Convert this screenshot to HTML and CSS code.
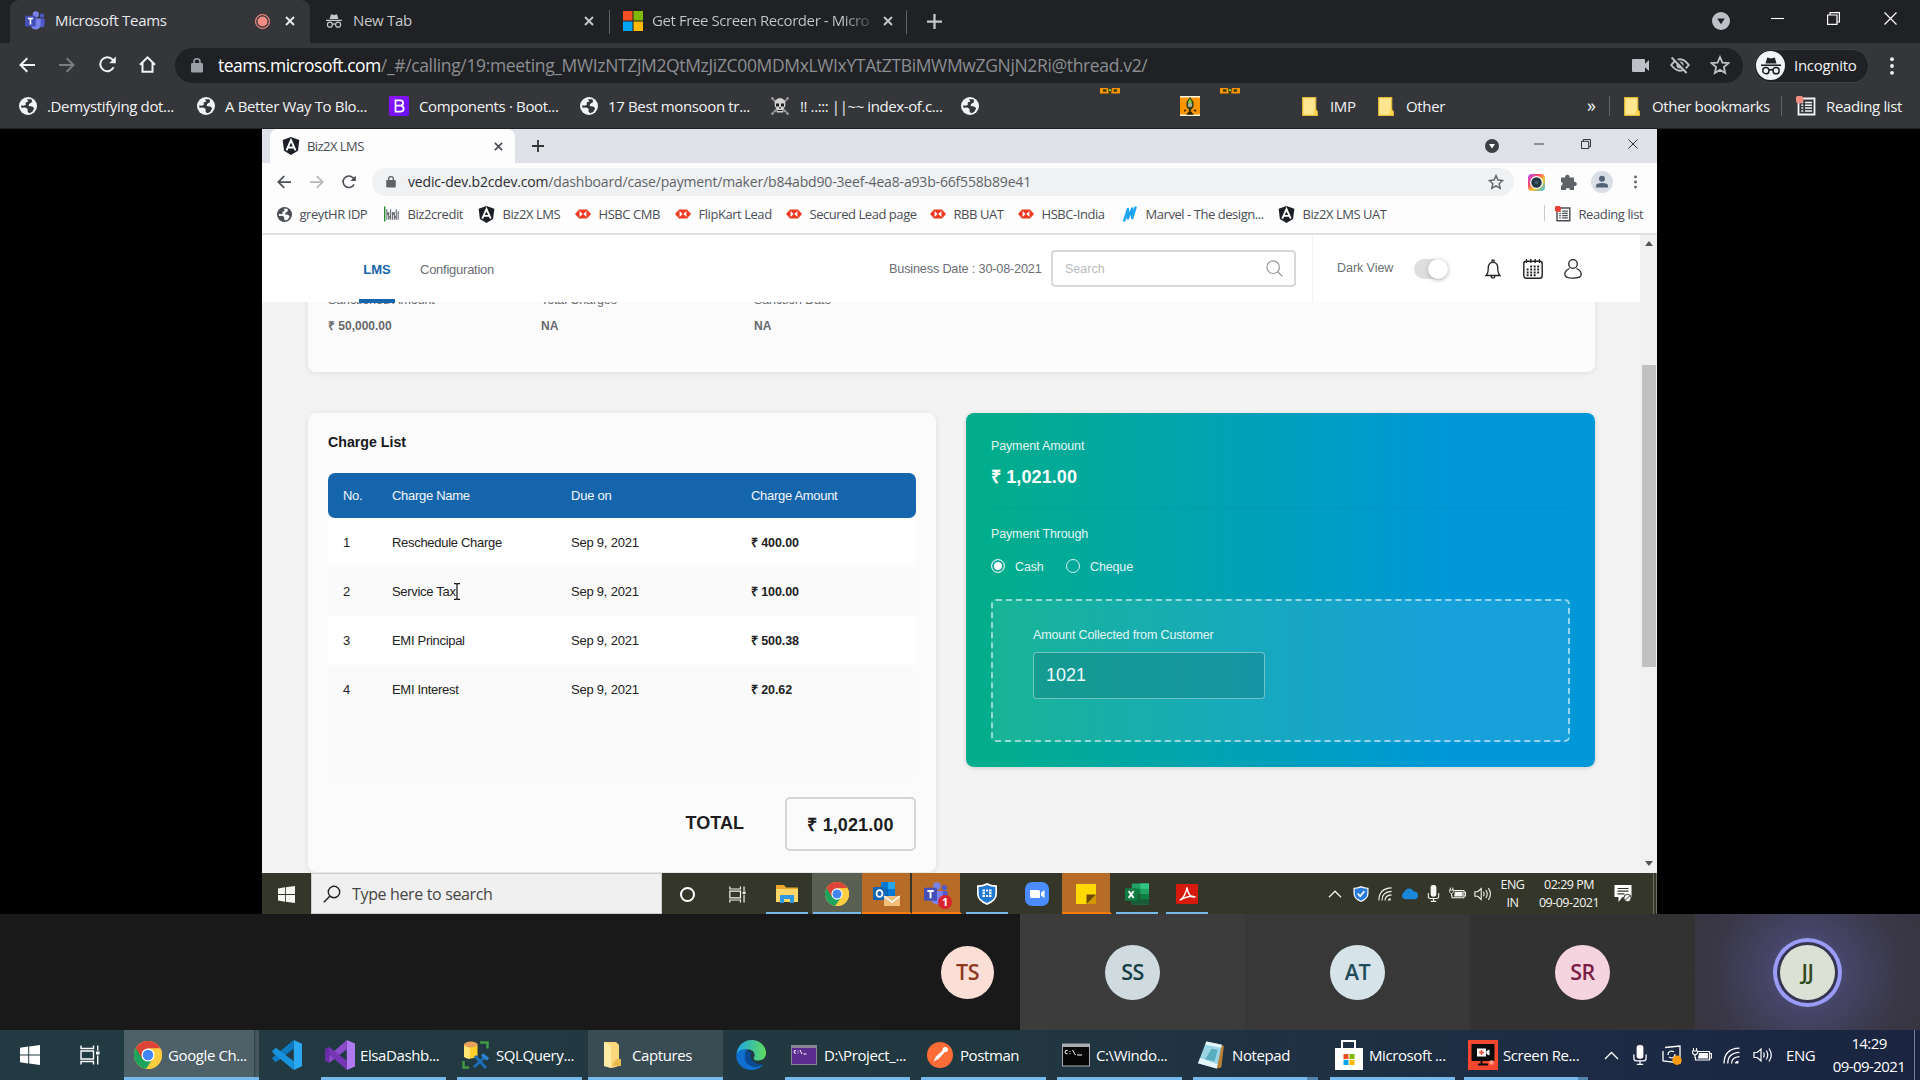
FILE: index.html
```html
<!DOCTYPE html>
<html lang="en">
<head>
<meta charset="utf-8">
<title>Microsoft Teams</title>
<link rel="stylesheet" href="styles.css">
</head>
<body>
<svg class="sprite" aria-hidden="true">
  <defs>
    <linearGradient id="bootG" x1="0" y1="0" x2="1" y2="1"><stop offset="0" stop-color="#9013fe"/><stop offset="1" stop-color="#6610f2"/></linearGradient>
    <linearGradient id="edgeG" x1="0" y1="0" x2="1" y2="0"><stop offset="0" stop-color="#1ea5e8"/><stop offset="1" stop-color="#5fdc5a"/></linearGradient>
    <linearGradient id="lensG" x1="0" y1="0" x2="1" y2="1"><stop offset="0" stop-color="#b44cff"/><stop offset=".35" stop-color="#ff4b6b"/><stop offset=".6" stop-color="#ffc629"/><stop offset="1" stop-color="#27b8f5"/></linearGradient>
  </defs>
  <symbol id="teams" viewBox="0 0 20 20"><circle cx="17" cy="4.6" r="2.2" fill="#5059c9"/><circle cx="10.8" cy="3.4" r="3.1" fill="#7b83eb"/><path d="M14 7.5h5.6v6a3 3 0 0 1-4.4 2.6z" fill="#5059c9"/><path d="M6 7.5h9.6v6.8a5 5 0 0 1-9.6 1z" fill="#7b83eb"/><rect y="4.8" width="10.8" height="10.8" rx="1" fill="#4450b8"/><path d="M2.8 7.5h5.3M5.45 7.5v6" stroke="#fff" stroke-width="1.6"/></symbol>
  <symbol id="x" viewBox="0 0 10 10"><path d="M1 1l8 8M9 1l-8 8" stroke="currentColor" stroke-width="1.9" fill="none"/></symbol>
  <symbol id="plus" viewBox="0 0 14 14"><path d="M7 0v14M0 7h14" stroke="currentColor" stroke-width="2.1"/></symbol>
  <symbol id="incog" viewBox="0 0 16 16"><path d="M5 1.2l3 .7 3-.7 1.4 4.8H3.600z" fill="currentColor"/><path d="M0 7.4h16" stroke="currentColor" stroke-width="1.3"/><g fill="none" stroke="currentColor" stroke-width="1.2"><circle cx="3.900" cy="11.700" r="2.500"/><circle cx="12.100" cy="11.700" r="2.500"/><path d="M6.400 11.400q1.600-1 3.200 0"/></g></symbol>
  <symbol id="mslogo" viewBox="0 0 20 20"><path d="M0 0h9.500v9.500H0z" fill="#f25022"/><path d="M10.500 0H20v9.500h-9.500z" fill="#7fba00"/><path d="M0 10.500h9.500V20H0z" fill="#00a4ef"/><path d="M10.500 10.500H20V20h-9.500z" fill="#ffb900"/></symbol>
  <symbol id="search-tabs" viewBox="0 0 18 18"><circle cx="9" cy="9" r="9" fill="currentColor"/><path class="knock" d="M5.200 6.500h7.600L9 12.300z"/></symbol>
  <symbol id="min" viewBox="0 0 13 13"><path d="M0 6.500h13" stroke="currentColor" stroke-width="1.100"/></symbol>
  <symbol id="restore" viewBox="0 0 13 13"><path d="M.6 3h9.400v9.400H.6zM3 3V.6h9.400V10H10" fill="none" stroke="currentColor" stroke-width="1.200"/></symbol>
  <symbol id="close" viewBox="0 0 13 13"><path d="M.5.5l12 12M12.500.5l-12 12" stroke="currentColor" stroke-width="1.200"/></symbol>
  <symbol id="back" viewBox="0 0 16 16"><path d="M16 8H1.800M8.300 1.200L1.500 8l6.800 6.800" fill="none" stroke="currentColor" stroke-width="2"/></symbol>
  <symbol id="fwd" viewBox="0 0 16 16"><path d="M0 8h14.200M7.700 1.200L14.500 8l-6.800 6.800" fill="none" stroke="currentColor" stroke-width="2"/></symbol>
  <symbol id="reload" viewBox="0 0 17 17"><path d="M14.600 11.300A7 7 0 1 1 13.600 3.600L15 5.200" fill="none" stroke="currentColor" stroke-width="2"/><path d="M16.800.6v6.600h-6.600z" fill="currentColor"/></symbol>
  <symbol id="home" viewBox="0 0 17 17"><path d="M1 8.700L8.500 1.400 16 8.700M3.500 7v8.800h10V7" fill="none" stroke="currentColor" stroke-width="2"/></symbol>
  <symbol id="lock" viewBox="0 0 12 15"><rect y="5" width="12" height="9.500" rx="1.300" fill="currentColor"/><path d="M3 6V3.800a3 3 0 0 1 6 0V6" fill="none" stroke="currentColor" stroke-width="1.600"/></symbol>
  <symbol id="cam" viewBox="0 0 17 13"><path d="M1 0h11a1 1 0 0 1 1 1v3.700L17 1v11l-4-3.700V12a1 1 0 0 1-1 1H1a1 1 0 0 1-1-1V1a1 1 0 0 1 1-1z" fill="currentColor"/></symbol>
  <symbol id="eye" viewBox="0 0 20 18"><path d="M1.200 9Q10-2.500 18.800 9 10 20.500 1.200 9z" fill="none" stroke="currentColor" stroke-width="2"/><circle cx="10" cy="9" r="3.600" fill="currentColor"/><path d="M3 .5l15 16" class="cut" stroke-width="2.500"/><path d="M1.600 1.500l15 15.500" stroke="currentColor" stroke-width="1.900"/></symbol>
  <symbol id="star" viewBox="0 0 18 18"><path d="M9 1.800l2.200 5 5.400.5-4.100 3.600 1.200 5.300L9 13.400l-4.700 2.800 1.200-5.300L1.400 7.300l5.400-.5z" fill="none" stroke="currentColor" stroke-width="1.600"/></symbol>
  <symbol id="dots" viewBox="0 0 4 18"><circle cx="2" cy="2.200" r="1.900" fill="currentColor"/><circle cx="2" cy="9" r="1.900" fill="currentColor"/><circle cx="2" cy="15.800" r="1.900" fill="currentColor"/></symbol>
  <symbol id="globe" viewBox="0 0 18 18"><circle cx="9" cy="9" r="9" fill="currentColor"/><path class="knock" d="M8 2.200l4.500 0 .6 2.700-3 2.200-.5 1.800 3.600.5 2 1.800-2 3.700-3.200 1.300-1.500-1.600.2-2.600-2.300-1.500-3.900.3-.4-2.600 2.400.6 2.400-1-.3-2.200 2.700-1.200z"/></symbol>
  <symbol id="boot" viewBox="0 0 20 20"><rect width="20" height="20" rx="2" fill="url(#bootG)"/><path d="M6.500 4.300h4.600c4 0 4 4.900.4 5.300 4.300.3 4.300 6.100-.4 6.100H6.500zM6.500 9.700h4.800" fill="none" stroke="#fff" stroke-width="1.700"/></symbol>
  <symbol id="skull" viewBox="0 0 20 20"><path d="M1.500 1.500l17 17M18.500 1.500l-17 17" stroke="#9b9b9b" stroke-width="2.200" stroke-dasharray="3 .5"/><path d="M4.500 8a5.500 6 0 1 1 11 0q0 3-1.800 4l-.5 4.500H6.800L6.300 12Q4.500 11 4.500 8z" fill="#d2d2d2"/><path d="M6 7.500h3v3H6zM11 7.500h3v3h-3zM9.500 11h1l.5 1.500H9zM7.500 14h5v.9h-5z" fill="#1e1e1e"/></symbol>
  <symbol id="sprout" viewBox="0 0 20 20"><path d="M0 0h20v20H0z" fill="#fff5e4"/><path d="M0 1.500h20v17H0z" fill="#ff9500"/><path d="M10 1l3.500 5v5L10 15l-3.500-4V6z" fill="#2e3a12"/><path d="M10 2.500l2.200 4L10 8 7.800 6.500z" fill="#7ecb3f"/><circle cx="10" cy="9" r="2.200" fill="#a9b5a0"/><path d="M10 14v3M6.500 18h7M4 15l2-1M16 15l-2-1M8 16.500h4" stroke="#2c2600" stroke-width="1.600"/></symbol>
  <symbol id="sprout-strip" viewBox="0 0 20 7"><path d="M0 0h20v5.500H0z" fill="#ff9500"/><path d="M3 1.200h3.500v2.600H3zM13.500 1.200H17v2.600h-3.500zM8 0h4l-1 7H9z" fill="#42390f"/><path d="M9 1h2v2H9z" fill="#71c23e"/></symbol>
  <symbol id="folder" viewBox="0 0 16 19"><path d="M.7.7h13V14l1.600.4v3.900H.7z" fill="#ffe68f" stroke="#e8bd33" stroke-width="1.200"/><path d="M12.300 12.500h2.200v5h-3.200z" fill="#ffd64d"/></symbol>
  <symbol id="reading" viewBox="0 0 20 20"><path d="M2.500 2.500h16v16h-16z" fill="none" stroke="currentColor" stroke-width="1.800"/><path d="M5.300 6.500h2M5.300 9.300h2M5.300 12.100h2M5.300 14.900h2M9 6.500h7M9 9.300h7M9 12.100h7M9 14.900h7" stroke="currentColor" stroke-width="1.500"/><circle cx="3.500" cy="3.500" r="4" class="dot"/></symbol>
  <symbol id="angular" viewBox="0 0 18 18"><path d="M9 0l8.300 2.900L16 13.800 9 18l-7-4.200L.7 2.900z" fill="#1c2026"/><path d="M4.500 13.400L9 3.200l4.500 10.200M6.300 10.500h5.400" fill="none" stroke="#fff" stroke-width="1.900"/></symbol>
  <symbol id="b2c" viewBox="0 0 17 16"><path d="M.7 0v16" stroke="#1f8a2a" stroke-width="1.500"/><path d="M3 3v11M5 6v8M7 3v11M9 6v8M11 6v8M13 3v11M15 5v9M3 6l4 7M9 6l4 7" fill="none" stroke="#6c7176" stroke-width="1.200"/></symbol>
  <symbol id="hsbc" viewBox="0 0 16 10"><path d="M0 5l4-4.500h8L16 5l-4 4.500H4z" fill="#ed3b22"/><path d="M4.600 2L7.600 5l-3 3zM11.400 2L8.400 5l3 3z" fill="#fff"/></symbol>
  <symbol id="marvel" viewBox="0 0 15 16"><path d="M1.800 14.500L5.400 3v9.500L9.700 2.500v9.700L13 1.500" fill="none" stroke="#1fa4f4" stroke-width="2.500" stroke-linejoin="round" stroke-linecap="round"/></symbol>
  <symbol id="lens" viewBox="0 0 17 17"><rect width="17" height="17" rx="4" fill="url(#lensG)"/><circle cx="8.500" cy="8.500" r="6.500" fill="#fff"/><circle cx="8.500" cy="8.500" r="5.200" fill="#223540"/><circle cx="8.500" cy="8.500" r="2" fill="#3c5868"/></symbol>
  <symbol id="puzzle" viewBox="0 0 16 16"><path d="M0 3.500h4.300a2.200 2.200 0 1 1 4.200 0H13v4.300a2.200 2.200 0 1 1 0 4.200v4H9a2.100 2.100 0 0 0-4.200 0H0v-4.200a2.100 2.100 0 0 0 0-4.100z" fill="#5f6368"/></symbol>
  <symbol id="avatar" viewBox="0 0 22 22"><circle cx="11" cy="11" r="11" fill="#d9dde6"/><circle cx="11" cy="7.700" r="3" fill="#526278"/><path d="M5 16.500v-1.800q0-2.700 6-2.700t6 2.700v1.800z" fill="#526278"/></symbol>
  <symbol id="mag" viewBox="0 0 17 17"><circle cx="7.200" cy="7.200" r="6.300" fill="none" stroke="currentColor" stroke-width="1.200"/><path d="M11.700 11.700l4.700 4.700" stroke="currentColor" stroke-width="1.300"/></symbol>
  <symbol id="wmag" viewBox="0 0 18 18"><circle cx="11" cy="7" r="5.700" fill="none" stroke="currentColor" stroke-width="1.400"/><path d="M7 11L.8 17.200" stroke="currentColor" stroke-width="1.500"/></symbol>
  <symbol id="bell" viewBox="0 0 16 20"><path d="M1 16.500q2.200-2 2.200-7Q3.200 3.300 8 3.300t4.800 6.200q0 5 2.200 7z" fill="none" stroke="#222" stroke-width="1.300"/><path d="M7 3V1.200h2V3M6.200 17q0 2 1.800 2t1.800-2" fill="none" stroke="#222" stroke-width="1.200"/></symbol>
  <symbol id="cal" viewBox="0 0 20 20"><rect x=".8" y="2.300" width="18.400" height="16.900" rx="2.500" fill="none" stroke="#222" stroke-width="1.400"/><path d="M3.500 0v4M7.800 0v4M12.200 0v4M16.500 0v4" stroke="#222" stroke-width="1.300"/><path d="M7.200 7.500h9.300M3.700 10.500h12.800M3.700 13.500h12.800M3.700 16.300h9" stroke="#222" stroke-width="1.900" stroke-dasharray="1.900 1.600"/></symbol>
  <symbol id="user" viewBox="0 0 18 20"><circle cx="9" cy="5" r="4.300" fill="none" stroke="#222" stroke-width="1.300"/><path d="M5.500 9.500Q.8 11.500.8 15.200q0 4 8.200 4t8.200-4q0-3.700-4.700-5.700" fill="none" stroke="#222" stroke-width="1.300"/></symbol>
  <symbol id="win" viewBox="0 0 20 20"><path d="M0 2.800l8.200-1.200v7.900H0zM9.200 1.500L20 0v9.500H9.200zM0 10.500h8.200v7.900L0 17.200zM9.200 10.500H20V20L9.200 18.500z" fill="currentColor"/></symbol>
  <symbol id="tview" viewBox="0 0 20 19"><path d="M1 0v3h12.500V0M1 19v-3h12.500v3M1 5.500h12.500v8H1zM17.700 0v5M17.700 10v9" fill="none" stroke="currentColor" stroke-width="1.400"/><path d="M16 6h3.500v3H16z" fill="currentColor"/></symbol>
  <symbol id="explorer" viewBox="0 0 24 20"><path d="M1 1h8l2 2.500h12V18H1z" fill="#eba92c"/><path d="M1 5h22v13H1z" fill="#ffd667"/><path d="M5 19v-8h14v8h-4v-4H9v4z" fill="#2f97e0"/></symbol>
  <symbol id="chrome" viewBox="0 0 26 26"><circle cx="13" cy="13" r="13" fill="#ffcd40"/><path d="M13 13L1.700 6.500a13 13 0 0 0 9.500 19.400L19 14z" fill="#1da35a"/><path d="M13 7h11.500A13 13 0 0 0 1.700 6.500L7.500 16z" fill="#dc4437"/><path d="M19.800 13A6.500 6.500 0 0 1 18 17l-6.800 8.900a13 13 0 0 0 13.300-19H13z" fill="#ffcd40"/><circle cx="13" cy="13" r="6.100" fill="#fff"/><circle cx="13" cy="13" r="4.900" fill="#4285f4"/></symbol>
  <symbol id="outlook" viewBox="0 0 27 26"><path d="M8 1h14v14H8z" fill="#28a8ea"/><path d="M8 1h7v7H8zM15 8h7v7h-7z" fill="#0078d4"/><path d="M8 8h7v7H8z" fill="#0364b8"/><rect y="6" width="13" height="13" rx="1" fill="#1066b5"/><ellipse cx="6.500" cy="12.500" rx="3" ry="3.400" fill="none" stroke="#fff" stroke-width="1.800"/><path d="M11 15h16v10H11z" fill="#f3bd7b"/><path d="M11 15l8 6 8-6" fill="none" stroke="#fff" stroke-width="1.500"/></symbol>
  <symbol id="shield" viewBox="0 0 20 22"><path d="M10 0q5 2.600 10 2.300V11q0 7-10 11Q0 18 0 11V2.300Q5 2.600 10 0z" fill="#fff"/><path d="M10 2q4 2 8.300 2v7q0 5.700-8.300 9-8.300-3.300-8.300-9V4Q6 4 10 2z" fill="#1e78d2"/><path d="M5.500 6.500h2.500v2H5.500zM9 6.500h2v2H9zM12 6.500h2.500v2H12zM5.500 9.300h2.500v2H5.500zM12 9.300h2.500v2H12zM5.500 12.100h2.500v2H5.500zM9 12.100h2v2H9zM12 12.100h2.500v2H12z" fill="#fff"/></symbol>
  <symbol id="zoomapp" viewBox="0 0 24 24"><rect width="24" height="24" rx="7" fill="#4a8cff"/><path d="M5 8h8.500q1.500 0 1.500 1.500V16H6.500Q5 16 5 14.500zM16 10.500L19.500 8v8L16 13.500z" fill="#fff"/></symbol>
  <symbol id="sticky" viewBox="0 0 20 20"><path d="M0 0h20v11l-9 9H0z" fill="#ffd900"/><path d="M10.500 10.500H20L10.500 20z" fill="#6b4a10"/><path d="M20 11v9h-9z" fill="#d49600"/></symbol>
  <symbol id="excel" viewBox="0 0 25 22"><rect x="7" width="18" height="22" rx="1" fill="#21a366"/><path d="M7 5.500h9V11H7z" fill="#107c41"/><path d="M16 0h9v5.500h-9z" fill="#33c481"/><path d="M7 11h18v11H7z" fill="#185c37"/><path d="M16 11h9v5.500h-9z" fill="#107c41"/><rect y="5" width="13" height="13" rx="1" fill="#107c41"/><path d="M3.800 8l5.200 7M9 8l-5.200 7" stroke="#fff" stroke-width="1.900"/></symbol>
  <symbol id="pdf" viewBox="0 0 23 21"><rect width="23" height="21" rx="1" fill="#d61a0c"/><path d="M4 17c3-1 7-8 7.500-13.500.8 7 4 11 8 10-3-1.500-10 0-15.500 3.500z" fill="none" stroke="#fff" stroke-width="1.500"/></symbol>
  <symbol id="caret" viewBox="0 0 15 9"><path d="M1 8l6.500-6.500L14 8" fill="none" stroke="currentColor" stroke-width="1.300"/></symbol>
  <symbol id="shieldok" viewBox="0 0 16 17"><path d="M8 0q4 2 8 1.800V8q0 6-8 9-8-3-8-9V1.800Q4 2 8 0z" fill="#fff"/><path d="M8 1.500q3.500 1.500 6.700 1.500v5.200q0 4.800-6.700 7.400-6.700-2.600-6.700-7.400V3Q4.500 3 8 1.500z" fill="#2a7bdb"/><path d="M4.500 8l2.600 3 4.500-5.500" fill="none" stroke="#fff" stroke-width="1.700"/></symbol>
  <symbol id="wifi" viewBox="0 0 16 16"><g fill="none" stroke="currentColor" stroke-width="1.200"><path d="M1 15.500Q1 1.500 15.500 1"/><path d="M4.500 15.500Q4.500 5.500 15.500 5"/><path d="M8 15.500Q8 9.500 15.500 9"/></g><path d="M11.300 15.500q0-2.500 3.200-2.600v2.600z" fill="currentColor"/></symbol>
  <symbol id="cloud" viewBox="0 0 18 12"><path d="M4 12a4 4 0 0 1-.4-7.600A5.300 5.300 0 0 1 13.500 4 4 4 0 0 1 14.300 12z" fill="#1a87d9"/></symbol>
  <symbol id="mic" viewBox="0 0 13 19"><rect x="3.300" width="6.400" height="13" rx="2.600" fill="currentColor"/><path d="M.7 9v3.500q0 2.500 2.300 2.500h7q2.300 0 2.300-2.500V9M6.500 15v3M3.500 18.300h6" fill="none" stroke="currentColor" stroke-width="1.200"/></symbol>
  <symbol id="batt" viewBox="0 0 20 14"><path d="M6 3.500h11.500V12H3.500V9M17.500 5.500h2v4.500h-2" fill="none" stroke="currentColor" stroke-width="1.200"/><path d="M7 5h9v5.500H6z" fill="currentColor"/><path d="M1.500 0v3M4.500 0v3M.3 3h5.400v2L3 7.500.3 5zM3 7v3" fill="none" stroke="currentColor" stroke-width="1.100"/></symbol>
  <symbol id="sound" viewBox="0 0 20 16"><path d="M1 5.500h3.200L8 2v12l-3.800-3.500H1z" fill="none" stroke="currentColor" stroke-width="1.200"/><path d="M10.500 5.500q1.500 2.500 0 5M13.200 3.500q3 4.500 0 9M16 1.500q4.500 6.500 0 13" fill="none" stroke="currentColor" stroke-width="1.200"/></symbol>
  <symbol id="note" viewBox="0 0 17 18"><path d="M0 0h17v12H8l-4 5v-5H0z" fill="#fff"/><path d="M3 3.500h11M3 6.200h11M3 8.900h7" stroke="#333628" stroke-width="1.200"/><circle cx="13" cy="13" r="3.700" fill="#fff" stroke="#333628"/><path d="M10.500 15.500l5-5" stroke="#333628"/></symbol>
  <symbol id="vscode" viewBox="0 0 31 31"><path d="M22.500 0L31 3.800v23.400L22.500 31z" fill="#2aa8f2"/><path d="M22.500 0v9L4 23l-3.500-3v-1.800z" fill="#0c7ac2"/><path d="M22.500 31v-9L4 8 .5 11v1.800z" fill="#1793de"/></symbol>
  <symbol id="vstudio" viewBox="0 0 31 31"><path d="M22.500 0L31 3.500v24L22.500 31z" fill="#b179f1"/><path d="M22.500 0v9.500L4.500 23.500 0 21.500V20z" fill="#8b4ccb"/><path d="M22.500 31v-9.500L4.500 7.500 0 9.500V11z" fill="#7536b5"/><path d="M0 9.500l4.500-2v16L0 21.500z" fill="#6a2ca8"/></symbol>
  <symbol id="sql" viewBox="0 0 28 28"><path d="M2 3.500v12q7 4 13.500 0v-12z" fill="#ffcf2c"/><path d="M2 4v12q3 1.800 6 2V4z" fill="#ffe476"/><ellipse cx="8.800" cy="3.500" rx="6.800" ry="3" fill="#e6a25a"/><path d="M18 1.500h7.500v6M1.500 20v6.500H7" fill="none" stroke="#3f9b44" stroke-width="2.500"/><path d="M13 15l11 12M24 15L12 26" stroke="#1e6db8" stroke-width="3"/><path d="M20 13.500l6 5" stroke="#2b86d1" stroke-width="3.500"/></symbol>
  <symbol id="bigfolder" viewBox="0 0 18 26"><path d="M1 0h12l3 3v21l-7 2-8-2z" fill="#fbd87b"/><path d="M1 0l7 3.500V26l-7-2z" fill="#ffeaa8"/><path d="M13 17h5v7h-9z" fill="#e9bb4c"/></symbol>
  <symbol id="edge" viewBox="0 0 30 30"><path d="M.5 14C1.500 5.500 8 0 15.500 0 24 0 30 6 30 13c0 5-3.500 7.500-8 7.500-3.500 0-5-1.500-4-3 2-4-1-8-6-8-6 0-10 3-11.500 4.500z" fill="url(#edgeG)"/><path d="M.3 14.500C2 10.500 7 8.800 11.500 9.500 7.500 13 8 22 14.500 25.500c4 2.200 9 1.500 13-1.500-3 4.500-7.500 6-12.500 6C6.500 30-.5 23 .3 14.500z" fill="#0f6fd0"/><path d="M11 11c-4.500 5-2 13 4 14.800 4 1.200 8.500.7 12.500-1.800-4.500 1-10.500-.5-12.500-6-.8-2.500 0-4 .5-5Q14 11 11 11z" fill="#0a4b94"/></symbol>
  <symbol id="cmdp" viewBox="0 0 26 20"><path d="M0 0h26v20H0z" fill="#8c8795"/><path d="M1 3h24v16H1z" fill="#5c2d91"/><path d="M5 5.500q-2-.5-2 1.300t2 1.300M7 5.800v.8M7 7.700v.8M9 5l2 4M12.500 9h3" stroke="#fff" fill="none"/></symbol>
  <symbol id="cmdk" viewBox="0 0 28 23"><path d="M0 0h28v23H0z" fill="#a9adb2"/><path d="M1 3.500h26V22H1z" fill="#060606"/><path d="M5.500 7q-2.500-.5-2.500 1.600t2.500 1.600M8 7.500v.9M8 9.500v.9M10.500 6.500l3 5M15 11.500h5" stroke="#fff" fill="none"/></symbol>
  <symbol id="postman" viewBox="0 0 26 26"><circle cx="13" cy="13" r="13" fill="#ff6c37"/><path d="M6.500 19.500l2.500-5 7-6.500 2 2-6.500 7z" fill="#fff"/><circle cx="18.300" cy="7.500" r="2.600" fill="#fff"/></symbol>
  <symbol id="notepad" viewBox="0 0 27 26"><path d="M8 1l17 3-2.500 21L18 26z" fill="#b98038"/><path d="M8 0l15 3-5 23L0 21z" fill="#9bd5e4"/><path d="M8 0l15 3-.7 3L7 3zM2 16l17 6-1 4L0 21z" fill="#e6f6f8"/><path d="M13 7l6 1-3 11-9-2z" fill="#58aebf"/></symbol>
  <symbol id="store" viewBox="0 0 28 30"><path d="M7 9V1h13v8" fill="none" stroke="#fff" stroke-width="2"/><path d="M0 8h28v22H0z" fill="#fff"/><path d="M8.500 14h5v5h-5z" fill="#f25022"/><path d="M14.500 14h5v5h-5z" fill="#7fba00"/><path d="M8.500 20h5v5h-5z" fill="#00a4ef"/><path d="M14.500 20h5v5h-5z" fill="#ffb900"/></symbol>
  <symbol id="screc" viewBox="0 0 30 30"><path d="M0 0h30v30H0z" fill="#f4472f"/><rect x="3.500" y="4" width="23" height="17" rx="1" fill="#0c0c0c"/><path d="M9 8.500h9v8H9zM18.500 11l3-1.500v6l-3-1.500z" fill="#fff"/><path d="M11 12.500h5M13.500 10v5" stroke="#f4472f" stroke-width="1.500"/><path d="M13.500 21v3M10 24.500h10" stroke="#0c0c0c" stroke-width="2"/><circle cx="23.500" cy="22.500" r="2.200" fill="#ff9c88"/></symbol>
  <symbol id="sync" viewBox="0 0 20 20"><path d="M3 2.500L18 1v17L1 16V6" fill="none" stroke="currentColor" stroke-width="1.300"/><path d="M6 10q0-4 4-4l2 1M13 9q0 4-4 4l-2-1" fill="none" stroke="currentColor" stroke-width="1.200"/><circle cx="15" cy="15.200" r="4.700" fill="#ff9c12"/></symbol>
</svg>

<div class="browser dark">
  <div class="tabs">
    <div class="tab tab-on"><svg class="i20"><use href="#teams"/></svg><span>Microsoft Teams</span><i class="rec"></i><svg class="i10"><use href="#x"/></svg></div>
    <div class="tab tab-new"><svg class="i16"><use href="#incog"/></svg><span>New Tab</span><svg class="i10"><use href="#x"/></svg></div>
    <div class="tab tab-get"><svg class="i20"><use href="#mslogo"/></svg><span>Get Free Screen Recorder - Micro</span><svg class="i10"><use href="#x"/></svg></div>
    <svg class="newtab"><use href="#plus"/></svg>
    <div class="wctl"><svg class="i18 srch"><use href="#search-tabs"/></svg><svg class="i13"><use href="#min"/></svg><svg class="i13"><use href="#restore"/></svg><svg class="i13"><use href="#close"/></svg></div>
  </div>
  <div class="toolbar">
    <div class="nav"><svg class="i16"><use href="#back"/></svg><svg class="i16 off"><use href="#fwd"/></svg><svg class="i17"><use href="#reload"/></svg><svg class="i17"><use href="#home"/></svg></div>
    <div class="omni"><svg class="lock"><use href="#lock"/></svg><span class="url"><b>teams.microsoft.com</b><span class="path">/_#/calling/19:meeting_MWIzNTZjM2QtMzJiZC00MDMxLWIxYTAtZTBiMWMwZGNjN2Ri@thread.v2/</span></span>
      <div class="oact"><svg class="cam"><use href="#cam"/></svg><svg class="eye"><use href="#eye"/></svg><svg class="i20"><use href="#star"/></svg></div></div>
    <div class="pill"><i><svg class="i20"><use href="#incog"/></svg></i><span>Incognito</span></div>
    <svg class="dots"><use href="#dots"/></svg>
  </div>
  <div class="marks">
    <div class="bm"><svg class="i18"><use href="#globe"/></svg><span>.Demystifying dot...</span></div>
    <div class="bm"><svg class="i18"><use href="#globe"/></svg><span>A Better Way To Blo...</span></div>
    <div class="bm"><svg class="i20"><use href="#boot"/></svg><span>Components · Boot...</span></div>
    <div class="bm"><svg class="i18"><use href="#globe"/></svg><span>17 Best monsoon tr...</span></div>
    <div class="bm"><svg class="i20"><use href="#skull"/></svg><span class="tight">!! ..::: ||~~ index-of.c...</span></div>
    <div class="bm"><svg class="i18"><use href="#globe"/></svg></div>
    <svg class="strip"><use href="#sprout-strip"/></svg>
    <div class="bm"><svg class="i20"><use href="#sprout"/></svg></div>
    <svg class="strip"><use href="#sprout-strip"/></svg>
    <div class="bm"><svg class="fold"><use href="#folder"/></svg><span>IMP</span></div>
    <div class="bm"><svg class="fold"><use href="#folder"/></svg><span>Other</span></div>
    <div class="bm more">»</div>
    <div class="bm ruled"><svg class="fold"><use href="#folder"/></svg><span>Other bookmarks</span></div>
    <div class="bm ruled"><svg class="i20"><use href="#reading"/></svg><span>Reading list</span></div>
  </div>
</div>

<div class="stage">
  <div class="shared">
    <div class="light">
      <div class="ltabs">
        <div class="ltab"><svg class="i18"><use href="#angular"/></svg><span>Biz2X LMS</span><svg class="i9"><use href="#x"/></svg></div>
        <svg class="i12 lnew"><use href="#plus"/></svg>
        <div class="lctl"><svg class="i14 srch"><use href="#search-tabs"/></svg><svg class="i10"><use href="#min"/></svg><svg class="i10"><use href="#restore"/></svg><svg class="i10"><use href="#close"/></svg></div>
      </div>
      <div class="lbar">
        <div class="lnav"><svg class="i14"><use href="#back"/></svg><svg class="i14 off"><use href="#fwd"/></svg><svg class="i14"><use href="#reload"/></svg></div>
        <div class="lomni"><svg class="llock"><use href="#lock"/></svg><span class="lurl"><b>vedic-dev.b2cdev.com</b><span>/dashboard/case/payment/maker/b84abd90-3eef-4ea8-a93b-66f558b89e41</span></span><svg class="i16"><use href="#star"/></svg></div>
        <div class="lext"><svg class="i17"><use href="#lens"/></svg><svg class="i16"><use href="#puzzle"/></svg><svg class="i22"><use href="#avatar"/></svg><svg class="ldots"><use href="#dots"/></svg></div>
      </div>
      <div class="lmarks">
        <div class="lbm"><svg class="i15"><use href="#globe"/></svg><span>greytHR IDP</span></div>
        <div class="lbm"><svg class="i16"><use href="#b2c"/></svg><span>Biz2credit</span></div>
        <div class="lbm"><svg class="i17"><use href="#angular"/></svg><span>Biz2X LMS</span></div>
        <div class="lbm"><svg class="i16"><use href="#hsbc"/></svg><span>HSBC CMB</span></div>
        <div class="lbm"><svg class="i16"><use href="#hsbc"/></svg><span>FlipKart Lead</span></div>
        <div class="lbm"><svg class="i16"><use href="#hsbc"/></svg><span>Secured Lead page</span></div>
        <div class="lbm"><svg class="i16"><use href="#hsbc"/></svg><span>RBB UAT</span></div>
        <div class="lbm"><svg class="i16"><use href="#hsbc"/></svg><span>HSBC-India</span></div>
        <div class="lbm"><svg class="i16"><use href="#marvel"/></svg><span>Marvel - The design...</span></div>
        <div class="lbm"><svg class="i17"><use href="#angular"/></svg><span>Biz2X LMS UAT</span></div>
        <div class="lbm lread"><svg class="i16"><use href="#reading"/></svg><span>Reading list</span></div>
      </div>
    </div>

    <div class="view">
      <div class="page">
        <header class="head">
          <a class="lms">LMS</a><a class="conf">Configuration</a>
          <span class="bdate">Business Date : 30-08-2021</span>
          <div class="find"><span>Search</span><svg class="i17"><use href="#mag"/></svg></div>
          <div class="tools"><span class="dv">Dark View</span><i class="toggle"></i><svg class="bell"><use href="#bell"/></svg><svg class="i20"><use href="#cal"/></svg><svg class="usr"><use href="#user"/></svg></div>
        </header>
        <section class="card summary">
          <div><label>Sanctioned Amount</label><b>₹ 50,000.00</b></div>
          <div><label>Total Charges</label><b>NA</b></div>
          <div><label>Sanction Date</label><b>NA</b></div>
        </section>
        <div class="cols">
          <section class="card charges">
            <h2>Charge List</h2>
            <div class="table">
              <div class="tr th"><span>No.</span><span>Charge Name</span><span>Due on</span><span>Charge Amount</span></div>
              <div class="tr"><span>1</span><span>Reschedule Charge</span><span>Sep 9, 2021</span><b>₹ 400.00</b></div>
              <div class="tr"><span>2</span><span class="hover">Service Tax<svg class="ibeam" viewBox="0 0 8 17"><path d="M1 .7h2.200L4 1.500l.8-.8H7M1 16.300h2.200l.8-.8.8.8H7M4 1.500v14" fill="none" stroke="#111" stroke-width="1.200"/></svg></span><span>Sep 9, 2021</span><b>₹ 100.00</b></div>
              <div class="tr"><span>3</span><span>EMI Principal</span><span>Sep 9, 2021</span><b>₹ 500.38</b></div>
              <div class="tr"><span>4</span><span>EMI Interest</span><span>Sep 9, 2021</span><b>₹ 20.62</b></div>
            </div>
            <div class="total"><span>TOTAL</span><b>₹ 1,021.00</b></div>
          </section>
          <section class="pay">
            <p class="pl">Payment Amount</p>
            <p class="pa">₹ 1,021.00</p>
            <p class="pl pt">Payment Through</p>
            <div class="radios"><i class="rd on"></i><span class="cash">Cash</span><i class="rd"></i><span>Cheque</span></div>
            <div class="collect"><label>Amount Collected from Customer</label><div class="field">1021</div></div>
          </section>
        </div>
      </div>
      <div class="scroll"><i class="up"></i><i class="thumb"></i><i class="down"></i></div>
    </div>

    <div class="ltask">
      <div class="lt start"><svg class="i17"><use href="#win"/></svg></div>
      <div class="lsearch"><svg class="i18"><use href="#wmag"/></svg><span>Type here to search</span></div>
      <div class="lt"><i class="cortana"></i></div>
      <div class="lt"><svg class="i17"><use href="#tview"/></svg></div>
      <div class="lt run"><svg class="i24"><use href="#explorer"/></svg></div>
      <div class="lt run cur"><svg class="i24"><use href="#chrome"/></svg></div>
      <div class="lt alert"><svg class="i27"><use href="#outlook"/></svg></div>
      <div class="lt alert"><svg class="i24"><use href="#teams"/></svg><em>1</em></div>
      <div class="lt run"><svg class="i22"><use href="#shield"/></svg></div>
      <div class="lt"><svg class="i24"><use href="#zoomapp"/></svg></div>
      <div class="lt alert"><svg class="i20"><use href="#sticky"/></svg></div>
      <div class="lt run"><svg class="i24"><use href="#excel"/></svg></div>
      <div class="lt run"><svg class="i22"><use href="#pdf"/></svg></div>
      <div class="ltray"><svg class="i14"><use href="#caret"/></svg><svg class="i16"><use href="#shieldok"/></svg><svg class="i14"><use href="#wifi"/></svg><svg class="i17"><use href="#cloud"/></svg><svg class="i17"><use href="#mic"/></svg><svg class="i17"><use href="#batt"/></svg><svg class="i18"><use href="#sound"/></svg><span>ENG<br>IN</span><span>02:29 PM<br>09-09-2021</span><svg class="i18 note"><use href="#note"/></svg></div>
    </div>
  </div>
</div>

<div class="people">
  <div class="person ts"><i>TS</i></div>
  <div class="person ss"><i>SS</i></div>
  <div class="person at"><i>AT</i></div>
  <div class="person sr"><i>SR</i></div>
  <div class="person jj"><i>JJ</i></div>
</div>

<div class="task">
  <div class="t0"><svg class="i20"><use href="#win"/></svg></div>
  <div class="t0 tv"><svg class="i20"><use href="#tview"/></svg></div>
  <div class="app sel stacked"><svg class="i28"><use href="#chrome"/></svg><span>Google Ch...</span></div>
  <div class="t0 code"><svg class="i30"><use href="#vscode"/></svg></div>
  <div class="app"><svg class="i30"><use href="#vstudio"/></svg><span>ElsaDashb...</span></div>
  <div class="app"><svg class="i28"><use href="#sql"/></svg><span>SQLQuery...</span></div>
  <div class="app sel2"><svg class="i26"><use href="#bigfolder"/></svg><span>Captures</span></div>
  <div class="t0 edge"><svg class="i30"><use href="#edge"/></svg></div>
  <div class="app"><svg class="i26"><use href="#cmdp"/></svg><span>D:\Project_...</span></div>
  <div class="app"><svg class="i26"><use href="#postman"/></svg><span>Postman</span></div>
  <div class="app"><svg class="i28"><use href="#cmdk"/></svg><span>C:\Windo...</span></div>
  <div class="app stacked"><svg class="i28"><use href="#notepad"/></svg><span>Notepad</span></div>
  <div class="app"><svg class="i30"><use href="#store"/></svg><span>Microsoft ...</span></div>
  <div class="app stacked"><svg class="i30"><use href="#screc"/></svg><span>Screen Re...</span></div>
  <div class="tray"><svg class="i15"><use href="#caret"/></svg><svg class="i20"><use href="#mic"/></svg><svg class="i20"><use href="#sync"/></svg><svg class="i20"><use href="#batt"/></svg><svg class="i17"><use href="#wifi"/></svg><svg class="i20"><use href="#sound"/></svg><span>ENG</span><span class="clock">14:29<br>09-09-2021</span></div>
</div>
</body>
</html>
```
FILE: styles.css
```css
* { box-sizing: border-box; }
body { margin: 0; width: 1920px; height: 1080px; overflow: hidden; background: #000; font: 15px "Open Sans", "Noto Sans", sans-serif; letter-spacing: -.3px; white-space: nowrap; }
i { font-style: normal; }
p, h2 { margin: 0; }
svg { display: block; flex: none; }
.sprite { position: absolute; width: 0; height: 0; }
.i9 { width: 9px; height: 9px; }
.i10 { width: 10px; height: 10px; }
.i12 { width: 12px; height: 12px; }
.i13 { width: 13px; height: 13px; }
.i14 { width: 14px; height: 14px; }
.i15 { width: 15px; height: 15px; }
.i16 { width: 16px; height: 16px; }
.i17 { width: 17px; height: 17px; }
.i18 { width: 18px; height: 18px; }
.i20 { width: 20px; height: 20px; }
.i22 { width: 22px; height: 22px; }
.i24 { width: 24px; height: 24px; }
.i26 { width: 26px; height: 26px; }
.i27 { width: 27px; height: 26px; }
.i28 { width: 28px; height: 28px; }
.i30 { width: 30px; height: 30px; }

/* outer browser */
.dark { height: 129px; background: #35363a; color: #f1f3f4; border-bottom: 1px solid #202124; --knock: #35363a; --dot: #f28b82; }
.knock { fill: var(--knock); }
.cut { stroke: #202124; }
.dot { fill: var(--dot); }
.tabs { height: 43px; background: #202124; display: flex; align-items: center; padding-left: 10px; }
.tab { display: flex; align-items: center; height: 43px; color: #c4c7cb; }
.tab > span { flex: 1; padding-bottom: 2px; }
.tab-on { width: 300px; background: #35363a; border-radius: 9px 9px 0 0; padding: 0 15px 1px; color: #e8eaed; }
.tab-on > span { margin-left: 10px; }
.rec { width: 15px; height: 15px; border-radius: 50%; background: #f28b82; border: 1.500px solid #f28b82; box-shadow: inset 0 0 0 1.500px #35363a; margin-right: 15px; }
.tab-new { width: 299px; padding: 0 15px 1px 16px; }
.tab-new > span { margin-left: 11px; }
.tab-get { width: 298px; padding: 0 14px 1px 14px; background: linear-gradient(#5f6368, #5f6368) 0 10px / 1px 24px no-repeat, linear-gradient(#5f6368, #5f6368) 100% 10px / 1px 24px no-repeat; }
.tab-get > span { margin: 0 9px; letter-spacing: -.42px; background: linear-gradient(90deg, #c4c7cb 86%, #35363a); background-clip: text; color: transparent; }
.newtab { width: 15px; height: 15px; margin-left: 20px; color: #c4c7cb; }
.wctl { margin-left: auto; display: grid; grid-template-columns: 56px 56px 56px 59px; justify-items: center; align-items: center; color: #fff; padding-bottom: 6px; }
.wctl .srch { --knock: #202124; color: #bdc1c6; margin-top: 5px; }
.toolbar { height: 45px; display: flex; align-items: center; padding-left: 7px; }
.nav { display: grid; grid-template-columns: repeat(4, 40px); justify-items: center; align-items: center; margin-right: 8px; padding-bottom: 2px; }
.off { color: #7a7c80; }
.omni { width: 1568px; height: 35px; border-radius: 18px; background: #202124; display: flex; align-items: center; padding: 0 3px 1px 16px; }
.lock { width: 12px; height: 15px; color: #9aa0a6; }
.url { margin-left: 15px; flex: 1; font-size: 17.500px; letter-spacing: -.5px; color: #8b8e92; padding-bottom: 1px; }
.url b { font-weight: 400; color: #fff; }
.path { letter-spacing: -.35px; }
.oact { display: grid; grid-template-columns: repeat(3, 40px); justify-items: center; align-items: center; color: #bdc1c6; }
.cam { width: 17px; height: 13px; }
.eye { width: 20px; height: 18px; }
.pill { margin-left: 11px; width: 115px; height: 34px; border-radius: 17px; background: #202124; border: 1px solid #3d3f43; display: flex; align-items: center; padding-left: 1px; }
.pill i { width: 29px; height: 29px; border-radius: 50%; background: #f1f3f4; color: #202124; display: flex; align-items: center; justify-content: center; margin-right: 9px; }
.pill span { padding-bottom: 2px; }
.dots { width: 4px; height: 18px; margin-left: 21px; }
.marks { height: 40px; display: grid; grid-template-columns: 178px 192px 191px 190px 191px 139px 80px 40px 82px 76px 209px 22px 172px 138px; padding-left: 19px; align-items: start; }
.bm { height: 36px; display: flex; align-items: center; gap: 10px; letter-spacing: -.35px; }
.bm span { padding-bottom: 1px; }
.tight { letter-spacing: -.4px; }
.strip { width: 20px; height: 7px; }
.fold { width: 16px; height: 19px; margin-right: 2px; }
.more { font-size: 18px; padding-bottom: 2px; }
.ruled { background: linear-gradient(#5f6368, #5f6368) 0 8px / 1px 20px no-repeat; padding-left: 15px; }

/* shared desktop */
.stage { height: 785px; background: #000; padding-left: 262px; }
.shared { width: 1395px; height: 785px; background: #f3f3f3; font-size: 13px; }
.light { background: #fdfdfe; color: #4a4e54; height: 106px; border-bottom: 2px solid #e0e0e2; --knock: #fdfdfe; --dot: #ea4335; letter-spacing: -.4px; }
.ltabs { height: 34px; background: #dee1e8; display: flex; align-items: center; padding-left: 8px; }
.ltab { width: 245px; height: 34px; border-radius: 8px 8px 0 0; background: #fdfdfe; display: flex; align-items: center; padding: 0 12px; }
.ltab span { flex: 1; margin-left: 7px; letter-spacing: -.55px; }
.lnew { margin-left: 17px; color: #333; }
.lctl { margin-left: auto; display: grid; grid-template-columns: 46px 47px 47px 48px; justify-items: center; align-items: center; color: #222; padding-bottom: 5px; }
.lctl .srch { margin-top: 4px; --knock: #fff; color: #3c4043; }
.lbar { height: 38px; display: flex; align-items: center; }
.lnav { width: 110px; flex: none; padding-left: 6px; display: grid; grid-template-columns: repeat(3, 32.500px); justify-items: center; }
.lnav .off { color: #b5b7ba; }
.lomni { width: 1142px; flex: none; height: 28px; border-radius: 14px; background: #eff1f3; display: flex; align-items: center; padding: 0 10px 0 14px; color: #5f6368; }
.llock { width: 10px; height: 12px; }
.lurl { flex: 1; margin-left: 12px; font-size: 14px; letter-spacing: -.17px; padding-bottom: 1px; }
.lurl b { font-weight: 400; color: #2b2d30; }
.lext { display: grid; grid-template-columns: 33px 30px 43px 10px; align-items: center; padding-left: 14px; }
.ldots { width: 3px; height: 14px; color: #5f6368; }
.lmarks { height: 30px; display: grid; grid-template-columns: 107px 94px 97px 100px 111px 144px 88px 104px 156px 266px 114px; padding-left: 15px; padding-bottom: 4px; align-items: center; }
.lbm { display: flex; align-items: center; gap: 7.500px; letter-spacing: -.45px; }
.lread { background: linear-gradient(#c8cacc, #c8cacc) 0 0 / 1px 16px no-repeat; padding-left: 11px; letter-spacing: -.4px; }
.view { height: 638px; display: flex; }
.page { width: 1378px; font-family: "Liberation Sans", Arial, sans-serif; font-size: 13px; letter-spacing: -.3px; color: #222; overflow: hidden; }
.head { position: relative; z-index: 1; height: 67px; background: #fff; display: flex; align-items: center; color: #6b6e73; }
.lms { margin-left: 97px; width: 36px; height: 69px; line-height: 71px; text-align: center; font-weight: 700; letter-spacing: 0; color: #1565ac; border-bottom: 4px solid #1565ac; }
.conf { margin-left: 25px; width: 469px; padding-top: 2px; letter-spacing: -.25px; }
.bdate { width: 162px; font-size: 12.700px; letter-spacing: -.18px; }
.find { width: 245px; height: 37px; border: 2px solid #d9d9d9; border-radius: 4px; display: flex; align-items: center; justify-content: space-between; padding: 0 11px 0 12px; color: #b9bbbe; font-size: 12.500px; letter-spacing: 0; }
.find svg { color: #999; }
.tools { margin-left: 16px; height: 67px; border-left: 1px solid #f2f2f2; padding-left: 24px; flex: 1; display: grid; grid-template-columns: 77px 71px 38px 41px 20px; align-items: center; letter-spacing: 0; }
.dv { font-size: 12.500px; padding-bottom: 2px; letter-spacing: -.05px; }
.toggle { width: 34px; height: 20px; border-radius: 10px; background: #dedede; display: flex; justify-content: flex-end; }
.toggle::after { content: ""; width: 20px; height: 20px; border-radius: 50%; background: #fff; box-shadow: 0 1px 4px #aaa; }
.bell { width: 16px; height: 20px; }
.usr { width: 18px; height: 20px; }
.card { background: #fbfbfb; border-radius: 8px; box-shadow: 0 1px 6px rgba(0, 0, 0, .09); }
.summary { margin: -20px 0 0 46px; width: 1287px; height: 90px; padding: 11px 20px; display: grid; grid-template-columns: 213px 213px 213px; color: #66686c; font-size: 12.500px; letter-spacing: -.1px; }
.summary label { display: block; line-height: 15px; margin-bottom: 11px; }
.summary b { display: block; line-height: 15px; font-size: 12px; letter-spacing: 0; }
.cols { display: flex; gap: 30px; margin: 41px 0 0 46px; align-items: flex-start; }
.charges { width: 628px; height: 459px; padding: 21px 20px 0; }
.charges h2 { font-size: 14.200px; line-height: 16px; color: #16181d; letter-spacing: 0; }
.table { margin-top: 23px; height: 307px; background: #fafafa; }
.tr { display: grid; grid-template-columns: 49px 179px 180px 1fr; padding-left: 15px; height: 49px; align-items: center; }
.tr:nth-child(even) { background: #fefefe; }
.tr span:nth-child(3) { letter-spacing: -.22px; }
.tr b { font-size: 12.500px; letter-spacing: -.1px; }
.th { height: 45px; background: #1565ac; border-radius: 7px; color: #f2f6fb; padding-bottom: 1px; }
.hover { position: relative; }
.ibeam { position: absolute; left: 61px; top: -1px; width: 8px; height: 17px; }
.total { margin-top: 17px; display: flex; justify-content: flex-end; align-items: center; gap: 41px; font-weight: 700; font-size: 18px; color: #1b1d21; }
.total span { padding-bottom: 1px; letter-spacing: .05px; }
.total b { width: 131px; height: 54px; border: 2px solid #d3d5d6; border-radius: 5px; display: flex; align-items: center; justify-content: center; font-size: 18px; letter-spacing: .1px; }
.pay { width: 629px; height: 354px; border-radius: 8px; background: linear-gradient(90deg, #02ad8d 5%, #00a2b4 42%, #0098d8 77%, #0098d8); padding: 25px 25px 0; color: #e3f6f7; box-shadow: 0 1px 5px rgba(0, 0, 0, .15); font-size: 12.500px; letter-spacing: -.14px; }
.pl { line-height: 16px; }
.pa { line-height: 20px; margin-top: 13px; height: 42px; font-weight: 700; font-size: 18px; letter-spacing: .1px; color: #fff; border-bottom: 1px solid rgba(0, 110, 160, .12); }
.pt { margin-top: 17px; }
.radios { display: flex; align-items: center; margin-top: 15px; height: 17px; }
.radios span { padding: 2px 0 0 10px; }
.radios .cash { width: 61px; }
.rd { width: 14px; height: 14px; border: 1.500px solid #d8f2f4; border-radius: 50%; }
.rd.on { background: #fff; box-shadow: inset 0 0 0 2px #0aa595; }
.collect { margin-top: 25px; height: 143px; border: 2px dashed rgba(255, 255, 255, .55); border-radius: 5px; background: rgba(255, 255, 255, .09); padding: 26px 40px; }
.collect label { display: block; line-height: 16px; }
.field { margin-top: 9px; width: 232px; height: 47px; border: 1.500px solid rgba(255, 255, 255, .4); border-radius: 4px; background: rgba(20, 120, 125, .4); padding-left: 12px; line-height: 45px; font-size: 18px; letter-spacing: 0; color: #eefafa; }
.scroll { width: 17px; background: #f1f1f1; display: flex; flex-direction: column; align-items: center; }
.up, .down { width: 0; height: 0; border: 4px solid transparent; }
.up { margin-top: 2px; border-bottom: 5px solid #555; }
.thumb { width: 14px; height: 302px; background: #c1c1c1; margin-top: 119px; }
.down { margin-top: 194px; border-top: 5px solid #555; }

.ltask { height: 41px; background: #333628; color: #f5f5f0; display: flex; }
.lt { width: 50px; flex: none; display: flex; align-items: center; justify-content: center; padding: 1px 0 0; }
.lt.run { background: linear-gradient(#76b9ed, #76b9ed) 50% 100% / 42px 2px no-repeat; }
.lt.cur { background: linear-gradient(#76b9ed, #76b9ed) 50% 100% / 48px 2px no-repeat, #5a6051; }
.lt.alert { border-bottom: 2px solid #ff7b00; border-right: 2px solid #333628; background: #b66c26; padding-top: 2px; position: relative; }
.lt em { position: absolute; right: 8px; bottom: 3px; width: 14px; height: 14px; border-radius: 50%; background: #d9232e; font: 700 11px/14px "Open Sans", sans-serif; text-align: center; color: #fff; }
.lt.start { width: 49px; }
.lsearch { width: 351px; flex: none; background: #f0f0f0; border: 1px solid #ccc; color: #454545; font-size: 16px; display: flex; align-items: center; gap: 11px; padding-left: 11px; letter-spacing: -.35px; }
.lsearch svg { color: #222; }
.cortana { width: 15px; height: 15px; border: 2px solid #fff; border-radius: 50%; }
.ltray { margin-left: auto; width: 335px; display: grid; grid-template-columns: 25px 25px 23px 24px 24px 25px 21px 35px 78px 1fr; align-items: center; padding-left: 6px; font-size: 12.500px; line-height: 17.500px; text-align: center; border-right: 4px double #6c6f60; letter-spacing: -.5px; }
.note { margin-left: 6px; }

/* participants */
.people { height: 116px; background: #191919; display: grid; grid-template-columns: 1020px repeat(4, 225px); }
.person { display: flex; align-items: center; justify-content: center; }
.person i { width: 55px; height: 55px; border-radius: 50%; display: flex; align-items: center; justify-content: center; font-size: 21.500px; font-weight: 600; letter-spacing: -.5px; padding-bottom: 1px; }
.ts { justify-content: flex-end; padding-right: 26px; }
.person.ts i { width: 53px; height: 53px; background: #fbded6; color: #8e3a21; }
.ss { background: #3c3c3c; }
.ss i { background: #cfdbdf; color: #163f45; }
.at { background: #383838; }
.at i { background: #d6e4e9; color: #1f4a58; }
.sr { background: #323232; }
.sr i { background: #f5d3df; color: #7b1e46; }
.jj { background: radial-gradient(circle at center, #56588c 0, #454466 42px, #3a3848 90px, #373541); }
.jj i { background: #dbe2d5; color: #2f4a1c; box-shadow: 0 0 0 3px #363550, 0 0 0 7px #9a9cf8; }

/* outer taskbar */
.task { height: 50px; background: linear-gradient(90deg, #223a42, #223840 50%, #1c2a44 85%, #1a2440); color: #fff; display: grid; grid-template-columns: 60px 64px 135px 62px 136px 131px 135px 62px 136px 136px 136px 137px 134px 124px 1fr; letter-spacing: -.4px; font-size: 15px; }
.t0 { display: flex; align-items: center; justify-content: center; }
.t0.tv { padding-right: 4px; }
.t0.code { padding-right: 7px; }
.t0.edge { padding-right: 6px; }
.app { display: flex; align-items: center; gap: 5px; padding-left: 4px; background: linear-gradient(#76b9ed, #76b9ed) 0 100% / 125px 3px no-repeat; }
.app .i28 { margin: 0 1px; }
.app .i26 { margin: 0 2px; }
.stacked { background: linear-gradient(#5283ad, #5283ad) 114px 100% / 11px 3px no-repeat, linear-gradient(#76b9ed, #76b9ed) 0 100% / 125px 3px no-repeat; }
.app.sel { background: linear-gradient(#76b9ed, #76b9ed) 0 100% / 135px 3px no-repeat, linear-gradient(90deg, #4e6068 130px, #2b3f47 130px, #45565e 132px); padding-left: 9px; }
.app.sel2 { background: linear-gradient(#76b9ed, #76b9ed) 0 100% / 135px 3px no-repeat, #3a4c53; padding-left: 9px; }
.tray { display: grid; grid-template-columns: 26px 32px 30px 31px 30px 33px 39px 88px; padding-left: 16px; align-items: center; border-right: 1px solid #78808e; margin-right: 5px; }
.clock { text-align: center; line-height: 23px; letter-spacing: -.6px; }
```
